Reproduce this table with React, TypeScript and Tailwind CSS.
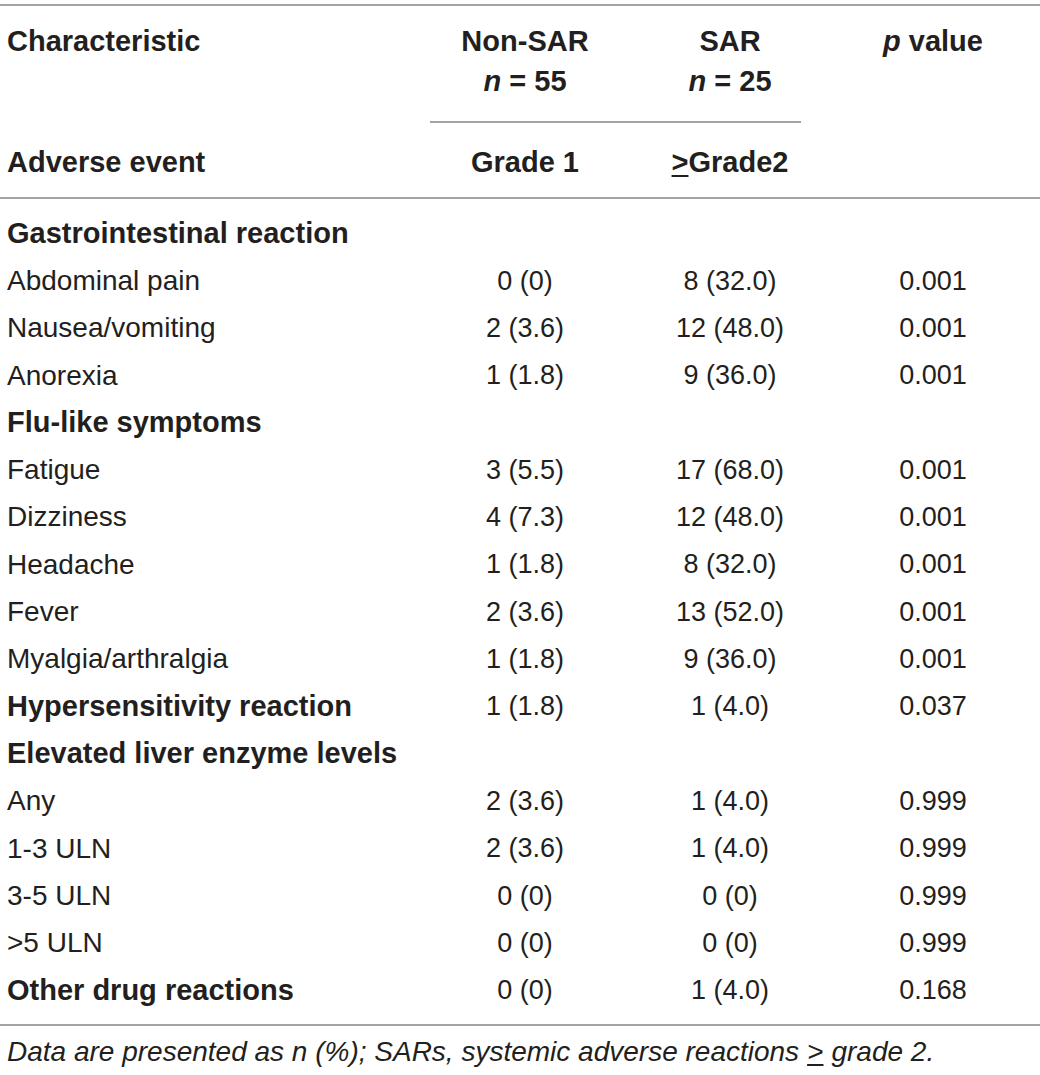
import React from "react";

interface Row {
  label: string;
  bold?: boolean;
  a?: string;
  b?: string;
  p?: string;
}

const rows: Row[] = [
  { label: "Gastrointestinal reaction", bold: true },
  { label: "Abdominal pain", a: "0 (0)", b: "8 (32.0)", p: "0.001" },
  { label: "Nausea/vomiting", a: "2 (3.6)", b: "12 (48.0)", p: "0.001" },
  { label: "Anorexia", a: "1 (1.8)", b: "9 (36.0)", p: "0.001" },
  { label: "Flu-like symptoms", bold: true },
  { label: "Fatigue", a: "3 (5.5)", b: "17 (68.0)", p: "0.001" },
  { label: "Dizziness", a: "4 (7.3)", b: "12 (48.0)", p: "0.001" },
  { label: "Headache", a: "1 (1.8)", b: "8 (32.0)", p: "0.001" },
  { label: "Fever", a: "2 (3.6)", b: "13 (52.0)", p: "0.001" },
  { label: "Myalgia/arthralgia", a: "1 (1.8)", b: "9 (36.0)", p: "0.001" },
  { label: "Hypersensitivity reaction", bold: true, a: "1 (1.8)", b: "1 (4.0)", p: "0.037" },
  { label: "Elevated liver enzyme levels", bold: true },
  { label: "Any", a: "2 (3.6)", b: "1 (4.0)", p: "0.999" },
  { label: "1-3 ULN", a: "2 (3.6)", b: "1 (4.0)", p: "0.999" },
  { label: "3-5 ULN", a: "0 (0)", b: "0 (0)", p: "0.999" },
  { label: ">5 ULN", a: "0 (0)", b: "0 (0)", p: "0.999" },
  { label: "Other drug reactions", bold: true, a: "0 (0)", b: "1 (4.0)", p: "0.168" },
];

const Rule = ({ className = "" }: { className?: string }) => (
  <div className={`h-[2px] bg-[#a3a3a3] ${className}`} />
);

const App = () => {
  return (
    <div className="w-[1040px] h-[1075px] bg-white text-[#231f20] font-['Liberation_Sans',Arial,sans-serif] text-[28px]">
      <div className="pt-[4px]">
        <Rule />

        {/* header */}
        <div className="font-bold text-[29px] pt-[16px]">
          <div className="flex h-[40px] items-center">
            <div className="w-[430px] pl-[7px]">Characteristic</div>
            <div className="w-[190px] text-center">Non-SAR</div>
            <div className="w-[220px] text-center">SAR</div>
            <div className="w-[186px] text-center">
              <i>p</i> value
            </div>
          </div>
          <div className="flex h-[40px] items-center">
            <div className="w-[430px]" />
            <div className="w-[190px] text-center">
              <i>n</i> = 55
            </div>
            <div className="w-[220px] text-center">
              <i>n</i> = 25
            </div>
          </div>
          <Rule className="ml-[430px] w-[371px] mt-[19px]" />
          <div className="flex h-[40px] items-center mt-[20px]">
            <div className="w-[430px] pl-[7px]">Adverse event</div>
            <div className="w-[190px] text-center">Grade 1</div>
            <div className="w-[220px] text-center">
              <span className="underline underline-offset-[3px] decoration-2">&gt;</span>Grade2
            </div>
          </div>
        </div>
        <Rule className="mt-[14px]" />

        {/* body */}
        <div className="pt-[11px]">
          {rows.map((r) => (
            <div key={r.label} className="flex h-[47.3px] items-center">
              <div className={`w-[430px] pl-[7px] ${r.bold ? "font-bold text-[29px]" : ""}`}>{r.label}</div>
              <div className="w-[190px] text-center text-[27px]">{r.a}</div>
              <div className="w-[220px] text-center text-[27px]">{r.b}</div>
              <div className="w-[186px] text-center text-[27px]">{r.p}</div>
            </div>
          ))}
        </div>
        <Rule className="mt-[10px]" />

        <div className="h-[40px] flex items-center pl-[7px] mt-[6px] italic text-[28px]">
          Data are presented as n (%); SARs, systemic adverse reactions{" "}
          <span className="ml-[8px] underline underline-offset-[3px]">&gt;</span>
          <span className="ml-[8px]">grade 2.</span>
        </div>
      </div>
    </div>
  );
};

export default App;
